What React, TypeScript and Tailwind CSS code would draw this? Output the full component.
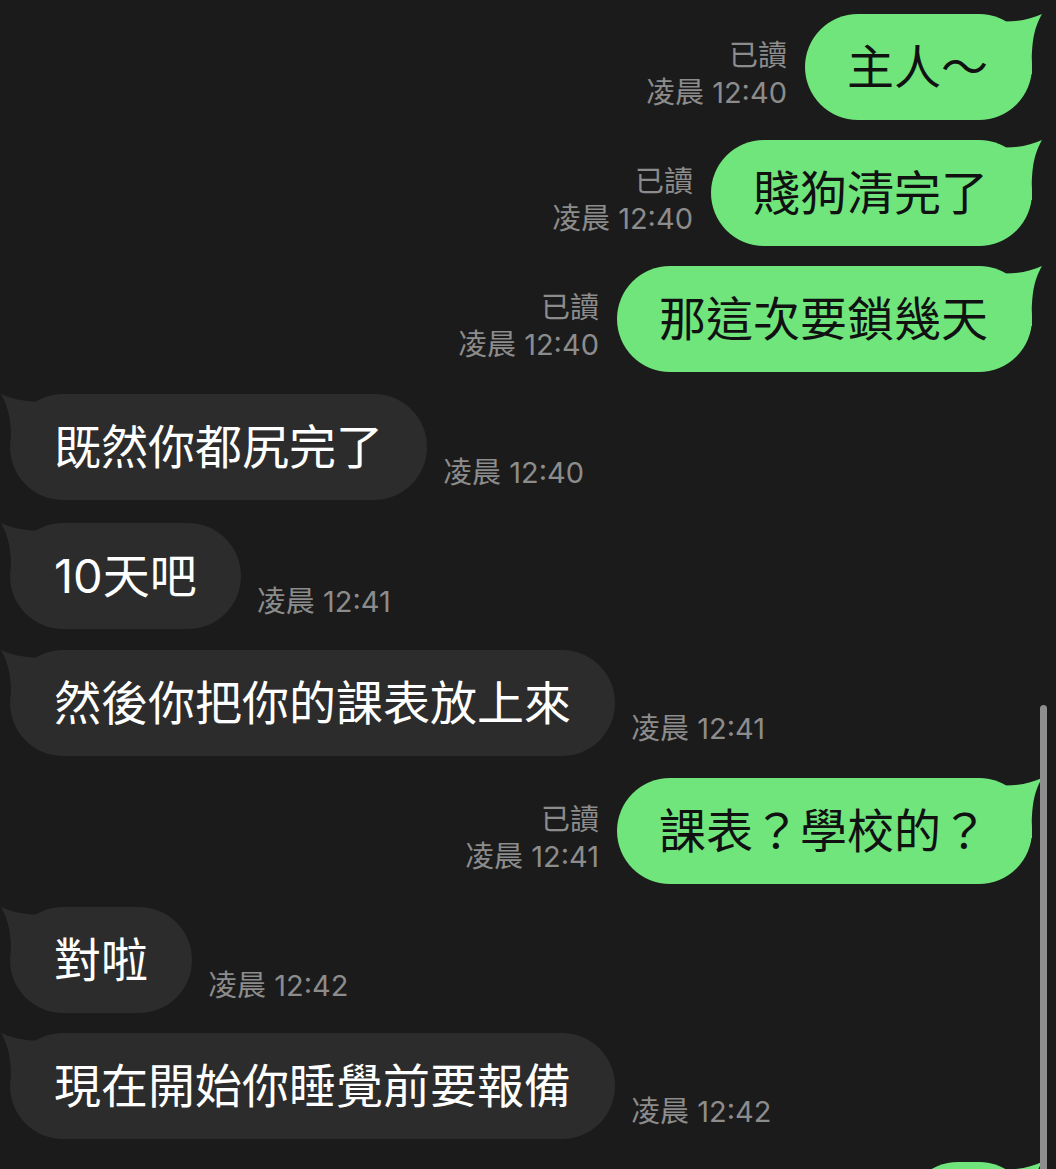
const FONT = "font-['Inter','Noto_Sans_CJK_TC',sans-serif]";

type Msg = { side: "me" | "them"; text: string; time: string; gap: string };

const messages: Msg[] = [
  { side: "me", text: "主人～", time: "凌晨 12:40", gap: "mt-[14px]" },
  { side: "me", text: "賤狗清完了", time: "凌晨 12:40", gap: "mt-[20px]" },
  { side: "me", text: "那這次要鎖幾天", time: "凌晨 12:40", gap: "mt-[20px]" },
  { side: "them", text: "既然你都尻完了", time: "凌晨 12:40", gap: "mt-[22px]" },
  { side: "them", text: "10天吧", time: "凌晨 12:41", gap: "mt-[23px]" },
  { side: "them", text: "然後你把你的課表放上來", time: "凌晨 12:41", gap: "mt-[21px]" },
  { side: "me", text: "課表？學校的？", time: "凌晨 12:41", gap: "mt-[22px]" },
  { side: "them", text: "對啦", time: "凌晨 12:42", gap: "mt-[23px]" },
  { side: "them", text: "現在開始你睡覺前要報備", time: "凌晨 12:42", gap: "mt-[20px]" },
];

function Tail({ color, flip }: { color: string; flip?: boolean }) {
  return (
    <svg
      width="54"
      height="60"
      viewBox="0 0 54 60"
      className={
        flip
          ? "absolute top-0 left-[-10px] -scale-x-100"
          : "absolute top-0 right-[-11px]"
      }
    >
      <path d="M0,6 C20,10 40,6 53,0 C45,14 42,28 43,60 L0,60 Z" fill={color} />
    </svg>
  );
}

function MyRow({ text, time, gap }: { text: string; time: string; gap: string }) {
  return (
    <div className={`flex justify-end items-end pr-6 ${gap}`}>
      <div className="flex flex-col items-end text-[29px] leading-[37px] text-[#8c8c8c] mr-[18px] mb-[9px]">
        <span>已讀</span>
        <span>{time}</span>
      </div>
      <div className="relative h-[106px] rounded-full bg-[#6fe57c] pl-[42px] pr-[44px] flex items-center">
        <Tail color="#6fe57c" />
        <span className="relative text-[47px] text-[#111] whitespace-nowrap">{text}</span>
      </div>
    </div>
  );
}

function TheirRow({ text, time, gap }: { text: string; time: string; gap: string }) {
  return (
    <div className={`flex items-end pl-[10px] ${gap}`}>
      <div className="relative h-[106px] rounded-full bg-[#2c2c2c] pl-[44px] pr-[44px] flex items-center">
        <Tail color="#2c2c2c" flip />
        <span className="relative text-[47px] text-white whitespace-nowrap">{text}</span>
      </div>
      <span className="text-[29px] leading-[37px] text-[#8c8c8c] ml-[16px] mb-[9px]">{time}</span>
    </div>
  );
}

export default function App() {
  return (
    <div className={`relative h-[1169px] w-[1056px] overflow-hidden bg-[#1b1b1b] ${FONT}`}>
      <div className="flex flex-col">
        {messages.map((m, i) =>
          m.side === "me" ? (
            <MyRow key={i} text={m.text} time={m.time} gap={m.gap} />
          ) : (
            <TheirRow key={i} text={m.text} time={m.time} gap={m.gap} />
          )
        )}
        {/* next outgoing bubble, only its top edge is on screen */}
        <div className="flex justify-end pr-6 mt-[23px]">
          <div className="relative h-[106px] w-[127px] rounded-full bg-[#6fe57c]">
            <Tail color="#6fe57c" />
          </div>
        </div>
      </div>
      <div className="absolute right-[9px] top-[705px] h-[480px] w-[7px] rounded-full bg-[#8e8e8e]" />
    </div>
  );
}
